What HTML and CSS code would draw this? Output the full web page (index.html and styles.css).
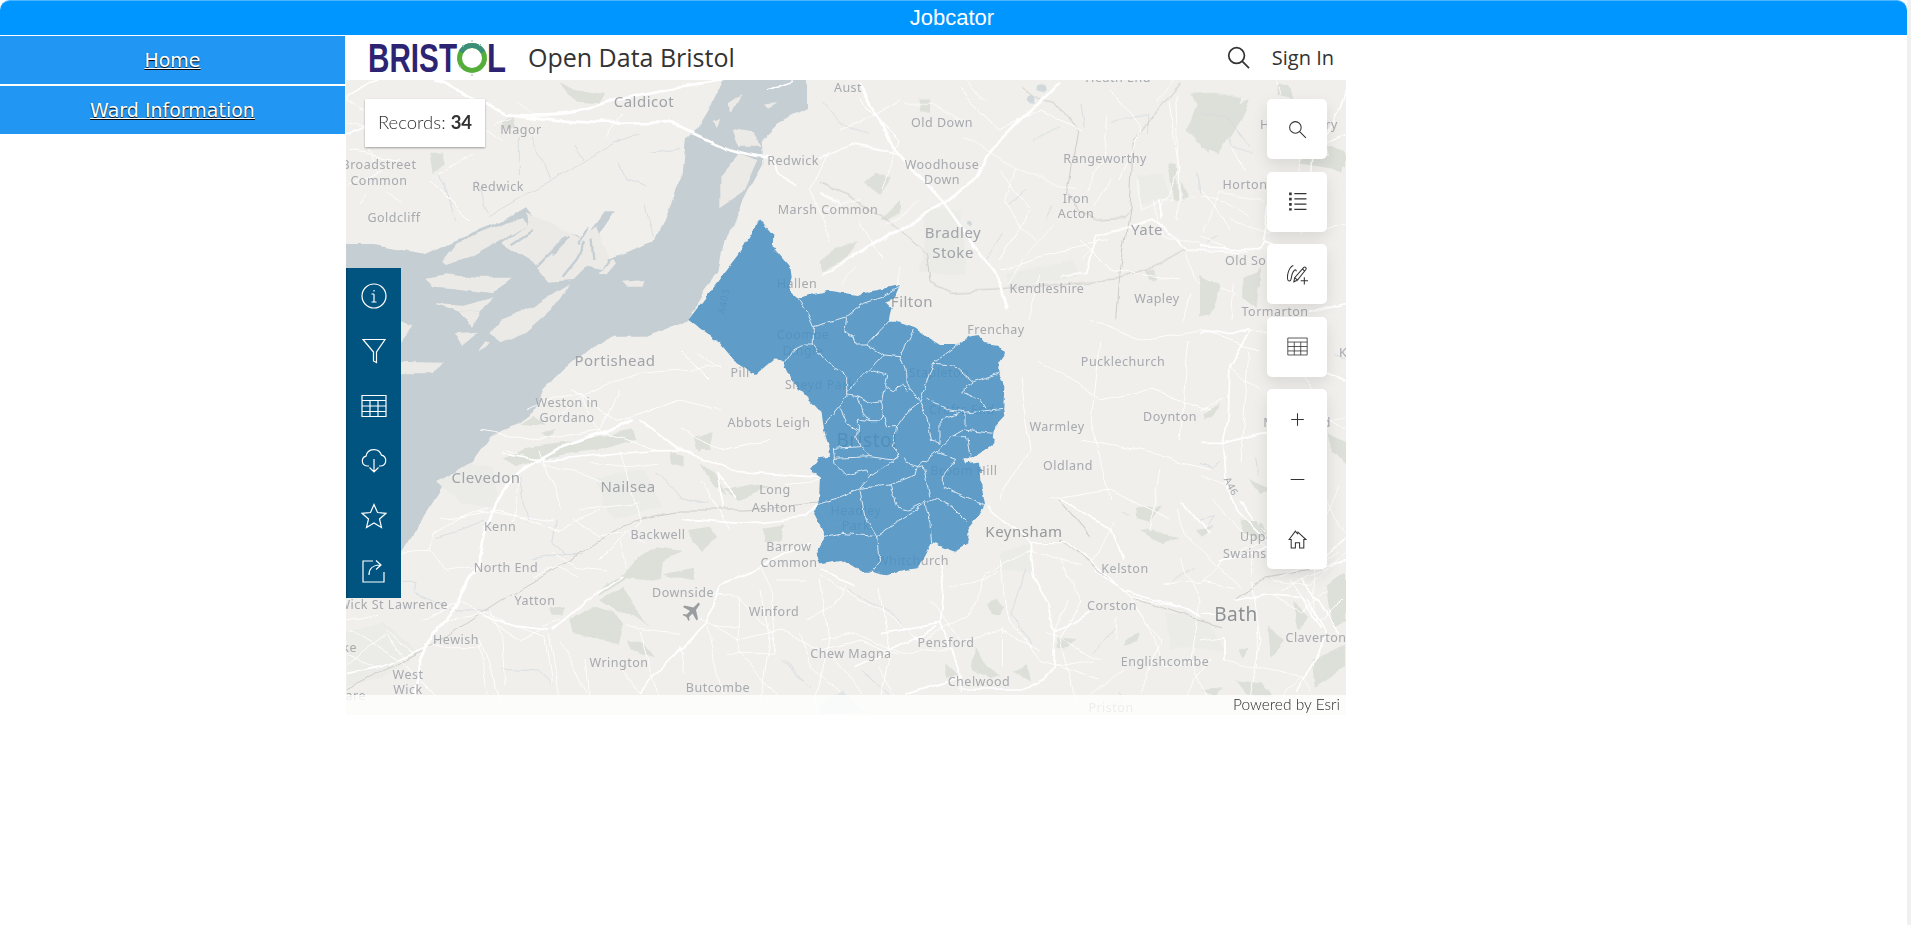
FILE: index.html
```html
<!DOCTYPE html>
<html>
<head>
    <meta charset="UTF-8">
    <title>Jobcator</title>
    <link rel="stylesheet" href="styles.css">
</head>
<body>
    <header class="topbar">Jobcator</header>
    <div class="main">
        <nav class="menu">
            <a href="#" class="menu-item">Home</a>
            <a href="#" class="menu-item">Ward Information</a>
        </nav>
        <section class="embed">
            <div class="embed-head">
                <svg class="logo" viewBox="0 -6 138 45">
                    <text class="logo-text" x="0" y="31" textLength="89" lengthAdjust="spacingAndGlyphs">BRIST</text>
                    <circle cx="104" cy="17" r="12.500" fill="none" stroke="#55ad3a" stroke-width="5"/>
                    <path d="M93 11a12.500 12.500 0 0 1 22 0" fill="none" stroke="#3b8f78" stroke-width="5"/>
                    <path d="M94 4l2 2M104 -1v2M113 3l-2 2M91 26l2-1M104 33v2" stroke="#8fc0a5" stroke-width="1"/>
                    <text class="logo-text" x="119" y="31" textLength="19" lengthAdjust="spacingAndGlyphs">L</text>
                </svg>
                <h1 class="site-title">Open Data Bristol</h1>
                <svg class="head-search" viewBox="0 0 24 24"><circle cx="10" cy="10" r="8.200"/><path d="M16 16l7 7"/></svg>
                <span class="sign-in">Sign In</span>
            </div>
            <div class="map">
                <svg class="basemap" viewBox="346 80 1000 635">
                    <defs>
                        <filter id="organic" filterUnits="userSpaceOnUse" x="346" y="80" width="1000" height="635">
                            <feTurbulence type="fractalNoise" baseFrequency=".03" numOctaves="3" seed="4" result="n"/>
                            <feDisplacementMap in="SourceGraphic" in2="n" scale="9" xChannelSelector="R" yChannelSelector="G"/>
                            <feGaussianBlur stdDeviation=".45"/>
                        </filter>
                        <filter id="jagged" filterUnits="userSpaceOnUse" x="346" y="80" width="1000" height="635">
                            <feTurbulence type="fractalNoise" baseFrequency=".12" numOctaves="2" seed="7" result="n"/>
                            <feDisplacementMap in="SourceGraphic" in2="n" scale="5" xChannelSelector="R" yChannelSelector="G"/>
                            <feGaussianBlur stdDeviation=".3"/>
                        </filter>
                    </defs>
                    <rect x="346" y="80" width="1000" height="635" fill="#f0efec"/>

                    <g filter="url(#organic)">
                    <!-- estuary -->
                    <g transform="translate(346 80) scale(.33333)">
                        <path class="water" d="M-30,495 L90,495 170,510 240,522 330,480 480,420 540,385 560,410 650,455 720,470 770,400 800,400 760,460 770,545 800,530 860,510 925,485 975,360 1010,280 1020,180 1060,140 1090,90 1140,-30 1380,-30 1380,90 1300,130 1250,180 1255,250 1210,330 1175,400 1130,520 1120,580 1080,630 1050,680 1020,720 985,735 900,770 800,770 720,810 650,870 590,930 560,1000 520,1030 430,1070 380,1140 290,1220 240,1300 165,1420 100,1500 -30,1500Z"/>
                        <g class="mud">
                            <path d="M285,545 L330,490 440,445 525,415 545,435 470,480 380,530 300,555Z"/>
                            <path d="M540,400 L650,450 700,470 750,440 790,530 770,570 720,560 680,600 610,605 560,545 470,490 545,435Z"/>
                            <path d="M235,590 L300,580 390,590 500,590 440,640 330,625 260,620Z"/>
                            <path d="M260,675 L350,680 440,655 395,700 330,700Z"/>
                            <path d="M330,700 L400,700 375,740Z"/>
                            <path d="M430,760 L460,720 560,680 672,610 620,690 540,760 470,790Z"/>
                            <path d="M825,605 L895,600 890,620 840,620Z"/>
                            <path d="M165,722 L205,740 165,790Z"/>
                            <path d="M320,760 L395,755 350,792Z"/>
                            <path d="M165,845 L285,848 260,880 165,880Z"/>
                            <path d="M400,812 L425,780 440,790Z"/>
                            <path d="M1120,290 L1180,220 1240,240 1200,330 1120,385Z"/>
                            <path d="M1145,70 L1190,40 1160,95Z"/>
                            <path d="M1255,75 L1290,65 1270,90Z"/>
                            <path d="M1100,120 L1120,110 1110,135Z"/>
                            <path d="M1160,150 L1220,160 1250,200 1180,200Z"/>
                            <path d="M760,585 L800,535 810,550 780,585Z"/>
                        </g>
                        <path class="channel" d="M660,470 L600,530 570,560 M720,480 L690,540 650,590 M740,470 L745,540 M700,490 L730,440 M560,450 L500,490 M620,520 L670,470"/>
                        <path class="green" d="M640,0 L690,25 780,40 760,70 690,65Z M250,215 L290,215 300,250 260,280Z M470,120 L500,100 510,140 480,150Z M520,1035 L560,1010 600,1040 Z"/>
                        <path class="stream" fill="none" d="M430,410 L620,300 800,190 880,160 M280,280 L330,420 M380,300 L430,400 M520,180 L520,280 M560,170 L610,300 M680,195 L710,240 M820,250 L840,300 900,320 M910,220 L1000,210 M900,370 L925,470"/>
                        <path class="r3" d="M0,130 L110,150 200,190 M280,280 C320,260 340,240 390,220 M60,340 L40,375 M0,60 L60,90 M420,150 L470,190 M120,340 L170,370 M640,1000 L700,950 820,900 M820,900 L880,880 1000,870 1130,860 M540,990 L600,960 700,940 M700,950 L760,1050 M1050,820 L1130,870 M0,310 L110,270 M60,200 L90,250 M440,130 L500,110 M520,60 L560,100 M830,100 L780,170"/>
                        <path class="r1" d="M270,0 C350,40 420,75 480,100 C560,105 640,105 690,95 C730,85 770,75 810,60 L1000,20 1130,0"/>
                        <path class="r1" d="M480,100 C560,115 620,118 690,125 C800,135 900,120 960,130 C1010,140 1080,180 1140,205 C1190,220 1230,228 1270,232"/>
                        <path class="r2" d="M0,60 C30,30 60,10 100,0 M0,170 C40,160 90,130 110,90 M1270,232 L1290,280 1320,300 1350,320 M1260,30 L1350,0"/>
                    </g>

                    <!-- south west -->
                    <g transform="translate(346 420) scale(.33333)">
                        <path class="green" d="M755,530 L840,475 900,480 945,470 950,430 1010,395 930,385 880,410 830,465 780,490Z M760,540 L830,500 870,560 920,620 880,590 820,580Z M670,600 L740,555 800,575 830,620 815,680 750,655 680,640Z M840,665 L890,665 930,715 880,700 850,690Z M470,120 L540,80 700,60 860,25 870,55 750,90 620,110 500,145Z M585,45 L630,30 610,60Z M1050,80 L1090,50 1060,100Z M970,90 L1010,110 1010,140 975,130Z M1060,130 L1100,160 1140,230 1100,200Z M1130,210 L1220,190 1270,200 1180,240Z M950,460 L1040,440 1045,470 980,470Z M1030,330 L1090,320 1110,350 1070,400 1040,370Z M610,570 L655,565 650,590 620,590Z M1250,320 L1320,310 1310,360 1260,370Z M1040,50 L1100,40 1090,90 1050,90Z"/>
                        <path class="mud2" d="M0,640 L110,600 220,700 100,780 0,800Z M270,190 L370,130 440,140 460,260 340,250 Z M740,170 L900,150 950,260 800,300Z"/>
                        <path class="stream" fill="none" d="M170,490 L210,490 205,520 300,560 M310,570 L430,570 M630,300 L620,370 660,400 720,400 M930,160 L1000,230 1090,250 M470,745 L580,750 620,790 M660,400 L560,420 M520,170 L540,300 M270,350 L370,320 420,300 M1310,720 L1380,780 M1300,720 L1400,800"/>
                        <path class="rail" d="M0,810 L220,700 480,530 720,390 860,300 1000,270 1200,270 1440,250"/>
                        <path class="r3" d="M170,400 L250,390 300,450 390,440 M250,390 L260,340 340,290 430,260 M470,90 L600,130 760,180 M400,270 L620,300 M740,130 L850,140 940,130 M700,270 L880,250 M680,300 L760,350 840,340 900,370 M620,400 L700,440 780,450 M300,600 L420,580 510,620 600,650 M600,650 L620,790 M610,640 L640,825 M430,570 L470,650 480,800 M260,680 L410,680 M0,730 L120,640 180,720 M400,680 L420,825 M720,720 L730,825 M820,740 L880,825 M840,620 L1000,640 M1100,520 L1180,530 1280,640 M1280,520 L1280,700 M1180,530 L1180,700 1290,825 M1140,700 L1280,700 M1360,640 L1400,740 1490,825 M1380,600 L1460,560 1500,500 M1240,440 L1280,520 M1100,620 L1180,620 M0,600 L100,580 M110,620 L200,700 M0,700 L100,750 M1000,680 L1010,760 M1080,620 L1130,825 M560,470 L630,440 700,470 M820,370 L840,440 M520,170 L500,300 M1290,480 L1380,480 M1420,330 L1500,300 M1320,190 L1440,180"/>
                        <path class="r2" d="M0,760 L110,740 250,680 M620,630 L740,530 830,470 M880,0 L1000,90 1150,150 1300,160 1430,170 M1240,440 L1130,500 1080,610 1010,680 900,790 880,825 M470,100 C620,150 800,80 1000,90 M1450,320 L1410,260 1380,290 1290,300 1180,310 1010,295 M1390,370 L1240,440 M610,630 L520,620 410,590 M1170,230 L1110,160 1130,270"/>
                        <path class="r1" d="M860,0 L760,40 650,80 560,130 500,170 450,250 420,340 400,430 330,560 260,640 225,720 205,825"/>
                    </g>

                    <!-- north east -->
                    <g transform="translate(820 60) scale(.33333)">
                        <path class="green" d="M1100,210 L1130,130 1110,100 1200,100 1265,115 1240,180 1160,275Z M295,115 L330,115 330,155 300,150Z M125,370 L165,335 210,355 175,405Z M185,475 L240,420 240,455 205,480Z M0,600 L50,560 110,550 90,590 0,640Z M1045,310 L1070,315 1075,420 1060,420Z M1080,360 L1110,410 1090,420Z M975,630 L1000,630 1005,660 985,660Z M1290,660 L1320,620 1320,680Z"/>
                        <path class="mud2" d="M960,350 L1030,340 1050,420 960,430Z M320,450 L420,450 440,640 300,640Z M560,640 L760,600 780,650 560,690Z"/>
                        <ellipse cx="665" cy="80" rx="15" ry="12" fill="#cfd9dc"/>
                        <ellipse cx="632" cy="118" rx="11" ry="12" fill="#cfd9dc"/>
                        <circle cx="450" cy="492" r="6" fill="#cfd9dc"/>
                        <path class="stream" fill="none" d="M0,120 L60,190 150,220 M700,440 L680,480 M620,380 L560,430 M780,130 L790,200 M870,190 L980,170 980,220 M640,240 L720,200 M1130,340 L1140,400 M1210,180 L1240,260 1300,280 M550,520 L500,600"/>
                        <path class="rail" d="M610,85 L640,110 700,120 770,210 740,400 780,460 830,480 910,475 930,450 940,240 1085,65 M0,370 L200,470 320,580 330,670 400,700 560,690 880,660 1000,620 1090,570 1280,575 M890,780 L900,640 930,450"/>
                        <path class="r3" d="M250,130 L340,130 450,190 M430,230 L590,320 660,350 730,380 770,390 M590,320 L550,420 600,500 650,540 M860,170 L850,290 800,400 M1070,100 L1080,390 1070,480 M960,360 L960,450 1030,420 1130,410 M1000,420 L1030,530 1140,550 M870,360 L820,440 M1150,520 L1200,400 1330,420 M610,590 L560,680 M700,500 L620,580 M1060,60 L1010,130 M240,620 L240,700 M110,620 L60,680 M200,500 L300,420 M1230,480 L1350,520 M0,450 L120,420 M430,60 L500,120 M840,540 L790,600 M1100,580 L1130,660 1250,700 M1110,700 L1090,780 M660,650 L620,780"/>
                        <path class="r2" d="M0,290 L100,250 240,280 M720,650 L800,640 830,530 920,505 1000,480 1060,530 1100,570 1280,575 M1030,480 L1020,420 M0,650 L100,590 M0,400 L60,430"/>
                        <path class="r1" d="M110,70 L240,280 375,430 520,640 560,740 M100,590 L375,430 470,350 510,270 720,60"/>
                    </g>

                    <!-- east and bath -->
                    <g transform="translate(820 500) scale(.3444 .33333)">
                        <path class="green" d="M480,315 L510,295 535,320 520,345 490,345Z M690,415 L745,420 720,445 690,445Z M920,25 L990,20 960,65 925,55Z M930,90 L990,130 1040,110 990,100 960,85Z M890,415 L930,400 920,430 875,440Z M360,480 L400,520 370,530Z M450,440 L480,500 530,530 500,540 440,510Z M560,510 L600,490 610,550 580,530Z M1280,60 L1300,100 1250,120Z M1300,380 L1350,420 1310,470Z M1480,250 L1527,260 1527,330 1500,350Z M1370,300 L1420,350 1390,390Z M1090,90 L1140,80 1110,110Z M1210,450 L1240,440 1230,470Z M1430,480 L1527,440 1527,500 1440,560Z M1110,570 L1170,565 1150,590Z M1210,540 L1280,550 1320,590 1240,590Z"/>
                        <path class="mud2" d="M520,160 L610,130 620,220 520,210Z M1000,340 L1130,360 1170,450 1020,440Z"/>
                        <path class="lake" d="M0,610 L60,570 130,645 0,645Z"/>
                        <path class="stream" fill="none" d="M80,270 L200,340 260,400 M560,340 L610,430 M880,40 L900,45 M1030,240 L1090,205 M800,450 L860,380 M870,570 L880,590 860,620 M120,510 L200,580 M600,210 L560,340"/>
                        <path class="rail" d="M690,0 L780,110 M700,120 L900,290 1100,360 1170,380 M1200,300 L1300,230 1430,210"/>
                        <path class="r3" d="M0,230 L200,350 290,420 430,350 M430,350 L480,220 610,150 M0,420 L100,400 240,460 M520,210 L480,240 380,260 M660,400 L820,480 M720,300 L680,400 M900,290 L950,370 1000,500 M860,350 L860,420 M680,500 L800,480 M1000,500 L1130,480 M1130,480 L1060,590 M1040,20 L1060,100 1110,150 1220,260 M1140,0 L1220,90 1300,150 M1470,0 L1527,100 M1280,80 L1380,190 M1340,230 L1500,160 M1310,280 L1400,340 1480,270 M1100,420 L1170,410 M1170,480 L1270,500 1400,530 1430,580 M1270,380 L1270,500 M1400,530 L1340,590 M780,590 L880,510 M530,380 L530,500 M240,460 L370,440 M170,500 L220,590 M40,470 L130,590 M1000,250 L1100,250 1180,170 M780,190 L860,70 M610,150 L760,200"/>
                        <path class="r2" d="M610,125 L620,230 665,320 680,400 680,500 650,540 590,570 M350,180 L360,260 350,370 400,500 410,580 M700,0 L850,90 880,180 M1170,410 L1170,480 M1420,300 L1470,400 1430,500 1380,580 M1200,300 L1290,280 1400,290 1450,380 M1050,0 L1130,100 M1220,0 L1290,110 M0,210 L100,260 M340,380 L100,500 M680,400 L780,330 M180,400 L350,370 M250,580 L410,530 M590,570 L400,570 M1527,110 L1420,210 M1160,180 L1230,170 1300,140"/>
                        <path class="r1 thin" d="M480,15 L610,125 710,125 800,200 900,290 1000,310 1100,340 1150,340 M800,215 L880,270 990,300 1110,350"/>
                    </g>

                    <!-- east edge -->
                    <g transform="translate(1200 320) scale(.33333)">
                        <path class="green" d="M10,280 L60,255 40,290 10,295Z M150,480 L215,510 180,520Z M120,600 L170,600 190,650 130,640Z M380,340 L438,370 438,440 390,400Z M380,800 L438,760 438,900 400,920Z"/>
                        <path class="stream" fill="none" d="M0,430 L40,445 60,430 M170,410 L180,470 M0,600 L40,590 10,640 M400,110 L440,120"/>
                        <path class="r3" d="M0,270 L70,240 M0,470 L80,500 M90,140 L180,210 M330,330 L438,290 M150,30 L320,60 M60,720 L200,660 M0,780 L100,800 M220,780 L330,800 430,700 M340,740 L350,900 M420,500 L380,580"/>
                        <path class="r2" d="M150,30 L90,140 85,290 70,370 80,500 110,570 180,640 M0,40 L100,40 150,25 M0,370 L70,370 180,340 330,330 M330,750 L438,720 M270,0 L340,130 438,180 M300,780 L380,870 420,950"/>
                    </g>
                    <g transform="translate(1200 30) scale(.33333)">
                        <path class="green" d="M0,190 L50,190 100,230 150,210 100,310 60,370 0,350Z M230,170 L270,170 280,210 230,200Z M380,350 L438,370 438,410 390,390Z M320,370 L438,390 420,420 300,400Z M0,730 L60,760 30,860 0,860Z M130,740 L180,720 170,830 130,800Z"/>
                        <path class="stream" fill="none" d="M0,250 L80,260 150,350 M50,620 L20,640"/>
                        <path class="r3" d="M0,500 L80,520 150,560 M100,350 L130,420 M0,620 L100,660 M230,160 L240,200 M330,300 L280,470 M300,610 L438,580 M100,760 L90,870"/>
                        <path class="r2" d="M0,650 L180,660 M438,180 L400,290 340,350 330,520 M350,690 L190,640 180,660 M380,340 L438,320 M438,820 L330,850 M190,640 L210,500"/>
                    </g>

                    <!-- lanes, page coordinates -->
                    <path class="lane" d="M700 620L740 640 780 630 820 650 860 640 900 655M760 590L770 640 760 700M820 580L830 640 815 700M880 590L890 650 880 700M930 600L960 640 1000 630 1040 650M1000 560L1010 620 1040 660 1100 680M1060 560L1080 600 1060 640 1075 700M1130 600L1160 640 1140 690M1180 560L1200 600 1190 660 1210 700M1250 560L1260 640 1250 700M1290 580L1320 620 1340 600M860 100L900 140 880 190M960 90L1000 130 1040 110 1080 130M1000 170L1030 210 1000 260M1110 90L1140 130 1120 180M1170 100L1180 170 1160 210M1200 190L1230 230M1080 240L1110 270 1180 280M1000 270L1060 250 1110 240M840 130L900 100M880 260L860 220M830 150L810 190 830 240M1090 320L1140 340 1200 330 1260 350M1040 360L1100 400 1150 390 1210 410M1080 440L1140 450 1210 470M1050 500L1110 490 1170 520M1160 470L1150 530M1100 340L1090 420 1110 500M1020 380L1030 450 1000 500M1190 340L1180 440M1250 350L1240 460M1300 370L1330 420 1346 430M1280 590L1346 560M420 620L460 600 520 640 560 620M350 630L400 660 440 700M480 640L500 700M560 640L590 700M640 630L660 700M440 520L500 510 560 530 600 510M480 430L540 440 600 430 660 450M540 450L560 510M620 450L640 520 600 560M680 430L720 450 770 440M700 480L730 530M570 390L620 420 680 400 720 410M620 390L600 430M680 350L710 380M360 110L420 130 470 110M350 150L400 160M430 180L470 220"/>
                    </g>

                    <!-- labels under the wards -->
                    <g class="labels">
                    <text class="lb lb-big" x="644" y="107">Caldicot</text>
                    <text class="lb" x="521" y="134">Magor</text>
                    <text class="lb" x="379" y="169">Broadstreet</text>
                    <text class="lb" x="379" y="185">Common</text>
                    <text class="lb" x="498" y="191">Redwick</text>
                    <text class="lb" x="394" y="222">Goldcliff</text>
                    <text class="lb" x="793" y="165">Redwick</text>
                    <text class="lb lb-big" x="615" y="366">Portishead</text>
                    <text class="lb" x="567" y="407">Weston in</text>
                    <text class="lb" x="567" y="422">Gordano</text>
                    <text class="lb" x="769" y="427">Abbots Leigh</text>
                    <text class="lb lb-big" x="486" y="483">Clevedon</text>
                    <text class="lb lb-big" x="628" y="492">Nailsea</text>
                    <text class="lb" x="500" y="531">Kenn</text>
                    <text class="lb" x="506" y="572">North End</text>
                    <text class="lb" x="535" y="605">Yatton</text>
                    <text class="lb" x="456" y="644">Hewish</text>
                    <text class="lb" x="408" y="679">West</text>
                    <text class="lb" x="408" y="694">Wick</text>
                    <text class="lb lb-end" x="448" y="609">Wick St Lawrence</text>
                    <text class="lb lb-end" x="357" y="652">ke</text>
                    <text class="lb lb-end" x="366" y="700">are</text>
                    <text class="lb" x="658" y="539">Backwell</text>
                    <text class="lb" x="775" y="494">Long</text>
                    <text class="lb" x="774" y="512">Ashton</text>
                    <text class="lb" x="789" y="551">Barrow</text>
                    <text class="lb" x="789" y="567">Common</text>
                    <text class="lb" x="683" y="597">Downside</text>
                    <text class="lb" x="774" y="616">Winford</text>
                    <text class="lb" x="619" y="667">Wrington</text>
                    <text class="lb" x="718" y="692">Butcombe</text>
                    <text class="lb" x="851" y="658">Chew Magna</text>
                    <text class="lb lb-big lb-dark" x="1024" y="537">Keynsham</text>
                    <text class="lb" x="1125" y="573">Kelston</text>
                    <text class="lb" x="1112" y="610">Corston</text>
                    <text class="lb" x="946" y="647">Pensford</text>
                    <text class="lb" x="979" y="686">Chelwood</text>
                    <text class="lb" x="1165" y="666">Englishcombe</text>
                    <text class="lb lb-city" x="1236" y="621">Bath</text>
                    <text class="lb" x="1316" y="642">Claverton</text>
                    <text class="lb" x="1111" y="712">Priston</text>
                    <text class="lb" x="848" y="92">Aust</text>
                    <text class="lb" x="1118" y="82">Heath End</text>
                    <text class="lb" x="942" y="127">Old Down</text>
                    <text class="lb" x="942" y="169">Woodhouse</text>
                    <text class="lb" x="942" y="184">Down</text>
                    <text class="lb" x="1105" y="163">Rangeworthy</text>
                    <text class="lb" x="1245" y="189">Horton</text>
                    <text class="lb" x="1076" y="203">Iron</text>
                    <text class="lb" x="1076" y="218">Acton</text>
                    <text class="lb" x="828" y="214">Marsh Common</text>
                    <text class="lb lb-big" x="953" y="238">Bradley</text>
                    <text class="lb lb-big" x="953" y="258">Stoke</text>
                    <text class="lb lb-big" x="1147" y="235">Yate</text>
                    <text class="lb lb-start" x="1225" y="265">Old Sodbury</text>
                    <text class="lb" x="1047" y="293">Kendleshire</text>
                    <text class="lb" x="1157" y="303">Wapley</text>
                    <text class="lb lb-big" x="912" y="307">Filton</text>
                    <text class="lb" x="1275" y="316">Tormarton</text>
                    <text class="lb" x="1299" y="129">Hawkesbury</text>
                    <text class="lb lb-start" x="1339" y="357">Kings</text>
                    <text class="lb" x="797" y="288">Hallen</text>
                    <text class="lb" x="996" y="334">Frenchay</text>
                    <text class="lb" x="1123" y="366">Pucklechurch</text>
                    <text class="lb" x="1057" y="431">Warmley</text>
                    <text class="lb" x="1068" y="470">Oldland</text>
                    <text class="lb" x="1170" y="421">Doynton</text>
                    <text class="lb" x="1297" y="427">Marshfield</text>
                    <text class="lb lb-start" x="1240" y="541">Upper</text>
                    <text class="lb lb-start" x="1223" y="558">Swainswick</text>
                    <text class="lb lb-road" transform="translate(1228 488) rotate(62)">A46</text>
                    <text class="lb" x="740" y="377">Pill</text>
                    <text class="lb" x="803" y="339">Coombe</text>
                    <text class="lb" x="803" y="355">Dingle</text>
                    <text class="lb" x="820" y="389">Sneyd Park</text>
                    <text class="lb" x="939" y="377">Stapleton</text>
                    <text class="lb" x="962" y="414">Crofts End</text>
                    <text class="lb lb-city" x="867" y="447">Bristol</text>
                    <text class="lb" x="964" y="475">Broom Hill</text>
                    <text class="lb" x="856" y="515">Headley</text>
                    <text class="lb" x="856" y="530">Park</text>
                    <text class="lb" x="913" y="565">Whitchurch</text>
                    <text class="lb lb-road" transform="translate(727 302) rotate(-80)">A403</text>
                    </g>
                    <path class="plane" d="M700 604l-1.500-1.500-5 5-9-2-1.500 1.500 7 4-3.500 3.500-3-.5-1 1 4 2 2 4 1-1-.5-3 3.500-3.500 4 7 1.500-1.500-2-9z"/>

                    <!-- wards -->
                    <g filter="url(#jagged)">
                    <g transform="translate(670 200) scale(.33333)">
                        <path class="city" d="M270,58 L310,105 308,140 362,205 365,235 355,268 385,295 440,280 480,272 560,285 620,270 690,255 672,295 645,305 665,325 655,365 680,365 735,385 770,410 810,435 860,435 895,410 925,405 945,430 985,435 1005,460 985,490 985,515 1003,560 1000,625 1003,650 975,680 970,730 930,760 905,775 880,775 885,790 930,785 935,860 945,915 920,955 895,985 895,1030 855,1055 785,1030 770,1060 745,1105 700,1110 640,1125 610,1115 585,1115 510,1080 450,1090 440,1060 465,1010 455,985 432,940 447,900 450,830 420,810 445,775 480,770 478,740 462,690 455,640 420,600 370,550 340,490 315,475 255,525 200,490 150,430 55,360 85,320 150,235 215,150Z"/>
                        <path class="ward" d="M385,295 L415,345 430,380 430,435 400,435 370,450 340,490 M430,380 L530,350 525,395 550,410 555,435 590,435 640,465 600,505 550,555 530,575 M430,435 L465,480 530,530 530,590 510,615 465,670 M530,350 L580,310 640,290 690,258 M590,435 L660,360 M640,465 L690,470 730,390 M690,470 L710,520 712,560 750,605 712,635 680,680 670,740 690,765 M600,510 L650,525 640,580 635,605 600,610 560,590 530,585 M560,590 L580,640 600,665 625,665 640,645 635,605 M640,645 L650,680 680,680 M640,560 L670,575 695,555 712,575 M510,625 L530,670 565,695 565,655 600,665 M565,695 L560,710 570,740 490,745 M570,740 L600,770 670,780 690,765 M490,775 L600,770 M490,745 L495,790 530,825 590,810 600,830 M690,765 L660,790 600,830 570,865 500,895 445,910 M570,870 L585,950 620,1010 625,1060 635,1080 610,1110 M460,1010 L515,1000 620,1010 M620,1010 L690,960 765,910 800,895 845,920 890,965 M765,910 L780,970 785,1030 M570,865 L660,855 735,825 740,805 M660,855 L680,920 715,930 765,905 M740,805 L760,800 780,890 M700,770 L710,790 745,800 800,755 860,775 820,830 820,860 950,920 M800,755 L845,710 890,710 900,770 M845,710 L880,690 970,700 M810,730 L810,660 885,635 885,680 M885,640 L1000,625 M750,605 L790,490 895,410 M790,490 L850,495 910,545 985,520 M910,545 L875,575 930,600 945,625 M750,610 L770,650 785,720 810,730 M770,595 L840,630 885,635"/>
                    </g>
                    </g>
                </svg>

                <div class="records">Records: <strong>34</strong></div>

                <div class="sidepanel">
                    <svg class="side-icon" viewBox="0 0 26 26"><circle cx="13" cy="13" r="12"/><path d="M13 11v8M10.500 11H13M10.500 19h5M13 7v1.500"/></svg>
                    <svg class="side-icon" viewBox="0 0 26 26"><path d="M2 1.500h22L15.500 14v10.500l-3-1.500v-9z"/></svg>
                    <svg class="side-icon" viewBox="0 0 26 26"><path d="M1 2.500h24v21H1zM1 7.500h24M1 13h24M1 18.500h24M9 7.500v16M17 7.500v16"/></svg>
                    <svg class="side-icon" viewBox="0 0 26 26"><path d="M8 18H6a5 5 0 0 1-1-9.800 8 8 0 0 1 15.500-1A5.500 5.500 0 0 1 20 18h-2M13 11v13M8.500 19.500L13 24l4.500-4.500"/></svg>
                    <svg class="side-icon" viewBox="0 0 26 26"><path d="M13 1.500l3.500 8 8.500.800-6.500 5.700 2 8.500-7.500-4.500-7.500 4.500 2-8.500L1 10.300l8.500-.8z"/></svg>
                    <svg class="side-icon" viewBox="0 0 26 26"><path d="M12 3H2v21h21V14M8 17c0-6 4-10 11-10M15 2.500L20 7l-5 4.500"/></svg>
                </div>

                <div class="tools">
                    <div class="tool"><svg class="tool-icon" viewBox="0 0 20 20"><circle cx="8" cy="8" r="5.500"/><path d="M12 12l6 6"/></svg></div>
                    <div class="tool"><svg class="tool-icon" viewBox="0 0 20 20"><path d="M7 2.500h11.500M7 7.500h11.500M7 12.500h11.500M7 17.500h11.500"/><path class="tool-dots" d="M2 1.500h2.500v2.500H2zM2 6.500h2.500V9H2zM2 11.500h2.500V14H2zM2 16.500h2.500V18.500H2z"/></svg></div>
                    <div class="tool"><svg class="tool-icon" viewBox="0 0 20 20"><path d="M6 1.500C2 3 0 10 .5 14c.4 3 3 3 3.500 0 .3-3 1-6 3-8 1.500-1 2 0 1.500 1M6.500 17l.8-4L16 3.200c1-1 2.800.600 2 2L9.800 15.500zM7.500 13l2.500 2.500M14.500 4.500l2.500 2.500M16.500 12.500v7M13 16h7"/></svg></div>
                    <div class="tool"><svg class="tool-icon" viewBox="0 0 26 26"><path d="M1 2.500h24v21H1zM1 7.500h24M1 13h24M1 18.500h24M9 7.500v16M17 7.500v16"/></svg></div>
                    <div class="tool-group">
                        <div class="tool"><svg class="tool-icon" viewBox="0 0 20 20"><path d="M10 4v12M4 10h12"/></svg></div>
                        <div class="tool"><svg class="tool-icon" viewBox="0 0 20 20"><path d="M3.500 10h13"/></svg></div>
                        <div class="tool"><svg class="tool-icon" viewBox="0 0 20 20"><path d="M2 10l6-8 2 2.500.5-1.500L18 10h-2v8h-4v-5H8v5H4v-8z"/></svg></div>
                    </div>
                </div>

                <div class="attribution">Powered by Esri</div>
            </div>
        </section>
    </div>
</body>
</html>
```

FILE: styles.css
```css
html {
    background-color: #f0f0f0;
}
body {
    margin: 0;
    width: 1907px;
    height: 925px;
    background-color: #fff;
    overflow: hidden;
}

.topbar {
    height: 34px;
    padding-right: 3px;
    border-top: 1px solid #4db5ff;
    border-radius: 10px 10px 0 0;
    background-color: #0096ff;
    color: #fff;
    font-family: "Liberation Sans", sans-serif;
    font-size: 22px;
    line-height: 33px;
    text-align: center;
}

.main {
    display: flex;
    align-items: flex-start;
}

.menu {
    width: 345px;
    margin-right: 1px;
    padding-top: 1px;
}
.menu-item {
    display: block;
    height: 48px;
    margin-bottom: 2px;
    background-color: #2196f3;
    color: #fff;
    font-family: "DejaVu Sans", sans-serif;
    font-size: 19px;
    line-height: 48px;
    text-align: center;
    text-shadow: 0 1px 1px #000;
}

.embed {
    width: 1000px;
}
.embed-head {
    display: flex;
    align-items: center;
    height: 45px;
    padding: 0 12px 0 22px;
    color: #333;
}
.logo {
    flex: none;
    width: 138px;
    height: 45px;
    margin-right: 22px;
}
.logo-text {
    fill: #2c2472;
    font-family: "Liberation Sans", sans-serif;
    font-size: 40px;
    font-weight: bold;
}
.site-title {
    flex: 1;
    margin: 0 0 2px;
    font-family: "Open Sans", sans-serif;
    font-size: 25px;
    font-weight: normal;
}
.head-search {
    width: 23px;
    height: 23px;
    margin-right: 22px;
    fill: none;
    stroke: #333;
    stroke-width: 1.800;
}
.sign-in {
    font-family: "Open Sans", sans-serif;
    font-size: 20px;
}

.map {
    position: relative;
    height: 635px;
    overflow: hidden;
}
.basemap {
    display: block;
    width: 1000px;
    height: 635px;
}

/* kaart */
.water {
    fill: #c5ced3;
}
.mud path {
    fill: #ebeae6;
}
.mud2 {
    fill: #ebebe8;
}
.channel {
    fill: none;
    stroke: #c5ced3;
    stroke-width: 7;
}
.lake {
    fill: #dfe4e7;
}
.green {
    fill: #dce0d8;
}
.stream {
    stroke: #d5dbdf;
    stroke-width: 2.500;
}
.rail {
    fill: none;
    stroke: #cfcdc8;
    stroke-width: 3;
}
.r1, .r2, .r3, .lane {
    fill: none;
    stroke: #fff;
    stroke-linejoin: round;
}
.r1 {
    stroke-width: 8;
}
.r1.thin {
    stroke-width: 4;
}
.r2 {
    stroke-width: 5;
}
.r3 {
    stroke-width: 2.500;
}
.lane {
    stroke-width: .9;
}
.labels {
    filter: blur(.3px);
}
.lb {
    fill: #a6a9ae;
    font-family: "Noto Sans", sans-serif;
    font-size: 12.500px;
    letter-spacing: .5px;
    text-anchor: middle;
}
.lb-big {
    fill: #a0a3a8;
    font-size: 15px;
}
.lb-dark {
    fill: #96999c;
}
.lb-city {
    fill: #8e9194;
    font-size: 19px;
}
.lb-start {
    text-anchor: start;
}
.lb-end {
    text-anchor: end;
}
.lb-road {
    font-size: 10px;
}
.plane {
    fill: #9a9da0;
}
.city {
    fill: #458ec2;
    fill-opacity: .85;
}
.ward {
    fill: none;
    stroke: #e4edf4;
    stroke-width: 2.800;
    stroke-linejoin: round;
}

/* cosas encima del mapa */
.records {
    position: absolute;
    left: 19px;
    top: 19px;
    width: 120px;
    height: 48px;
    background-color: #fff;
    box-shadow: 0 1px 2px rgba(0, 0, 0, .35);
    color: #323232;
    font-family: "Lato", sans-serif;
    font-size: 18.500px;
    font-weight: 300;
    line-height: 46px;
    text-align: center;
}
.records strong {
    font-weight: bold;
}
.sidepanel {
    position: absolute;
    left: 0;
    top: 188px;
    display: flex;
    flex-direction: column;
    width: 55px;
    height: 330px;
    background-color: #00547f;
    box-shadow: inset 2px 0 2px -1px #003f60;
}
.side-icon {
    width: 26px;
    height: 26px;
    margin: 14.500px;
    fill: none;
    stroke: #fff;
    stroke-width: 1.200;
}

.tools {
    position: absolute;
    right: 19px;
    top: 19px;
    display: flex;
    flex-direction: column;
    gap: 12.500px;
    width: 60px;
}
.tools > .tool,
.tool-group {
    border-radius: 5px;
    background-color: #fff;
    box-shadow: 0 6px 16px rgba(0, 0, 0, .1);
}
.tool {
    display: flex;
    align-items: center;
    justify-content: center;
    height: 60px;
}
.tool-icon {
    width: 21px;
    height: 21px;
    fill: none;
    stroke: #333;
    stroke-width: 1;
}
.tool-dots {
    fill: #333;
    stroke: none;
}

.attribution {
    position: absolute;
    left: 0;
    right: 0;
    bottom: 0;
    height: 20px;
    padding-right: 6px;
    background-color: rgba(255, 255, 255, .8);
    color: #2a2a2a;
    font-family: "Lato", sans-serif;
    font-size: 15.500px;
    font-weight: 300;
    line-height: 18px;
    text-align: right;
}
```
